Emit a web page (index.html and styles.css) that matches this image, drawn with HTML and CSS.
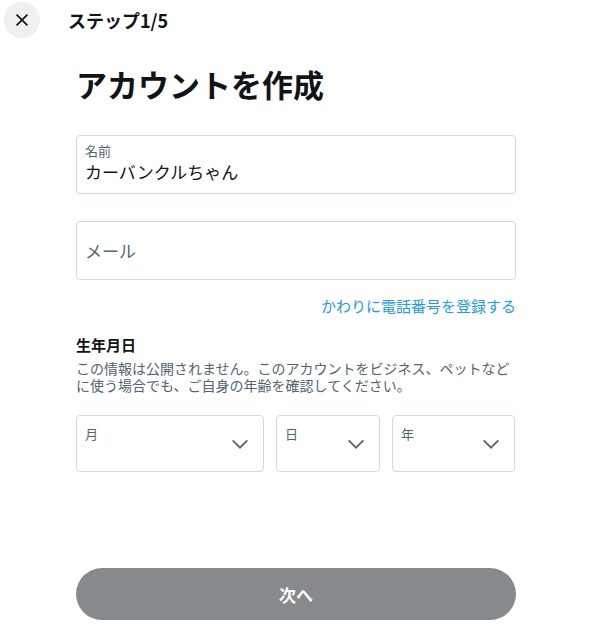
FILE: index.html
```html
<!DOCTYPE html>
<html lang="ja">
<head>
    <meta charset="UTF-8">
    <meta name="viewport" content="width=device-width, initial-scale=1.0">
    <title>アカウントを作成</title>
    <link rel="stylesheet" href="styles.css">
</head>
<body>
    <div class="header">
        <button class="close" aria-label="閉じる">
            <svg viewBox="0 0 24 24" width="20" height="20"><path d="M5.5 5.5l13 13M18.5 5.5l-13 13" stroke="#0f1419" stroke-width="2" fill="none"/></svg>
        </button>
        <div class="step">ステップ1/5</div>
    </div>

    <div class="content">
        <h1>アカウントを作成</h1>

        <div class="field">
            <div class="label">名前</div>
            <div class="value">カーバンクルちゃん</div>
        </div>

        <div class="field field-empty">
            <div class="placeholder">メール</div>
        </div>

        <div class="alt-link"><a href="#">かわりに電話番号を登録する</a></div>

        <div class="section-title">生年月日</div>
        <p class="note">この情報は公開されません。このアカウントをビジネス、ペットなどに使う場合でも、ご自身の年齢を確認してください。</p>

        <div class="dates">
            <div class="select">
                <span class="label">月</span>
                <svg class="chev" viewBox="0 0 24 24" width="22" height="22"><path d="M4 8l8 8 8-8" stroke="#536471" stroke-width="2" fill="none"/></svg>
            </div>
            <div class="select">
                <span class="label">日</span>
                <svg class="chev" viewBox="0 0 24 24" width="22" height="22"><path d="M4 8l8 8 8-8" stroke="#536471" stroke-width="2" fill="none"/></svg>
            </div>
            <div class="select">
                <span class="label">年</span>
                <svg class="chev" viewBox="0 0 24 24" width="22" height="22"><path d="M4 8l8 8 8-8" stroke="#536471" stroke-width="2" fill="none"/></svg>
            </div>
        </div>

        <button class="next" disabled>次へ</button>
    </div>
</body>
</html>
```

FILE: styles.css
```css
body {
    margin: 0;
    background-color: #fff;
    color: #0f1419;
    font-family: "Noto Sans CJK JP", "Noto Sans", sans-serif;
}
.header {
    display: flex;
    align-items: center;
    height: 40px;
    padding: 0 4px;
    gap: 28px;
}
.close {
    width: 36px;
    height: 36px;
    border: none;
    border-radius: 50%;
    background-color: #eff1f1;
    display: flex;
    align-items: center;
    justify-content: center;
    padding: 0;
}
.step {
    font-size: 18px;
    font-weight: bold;
}
.content {
    padding: 0 76px;
}
h1 {
    margin: 24px 0 31px;
    font-size: 31px;
    line-height: 40px;
    font-weight: bold;
}
.field {
    box-sizing: border-box;
    height: 59px;
    border: 1px solid #cfd9de;
    border-radius: 4px;
    padding: 7px 8px 0;
    margin-bottom: 27px;
}
.field .label {
    font-size: 13px;
    line-height: 16px;
    color: #536471;
    margin-bottom: 1px;
}
.value {
    font-size: 17px;
    line-height: 24px;
}
.field-empty {
    display: flex;
    align-items: center;
    padding-top: 0;
    margin-bottom: 16px;
}
.placeholder {
    font-size: 17px;
    color: #536471;
}
.alt-link {
    text-align: right;
    font-size: 15px;
    line-height: 20px;
}
.alt-link a {
    color: #1d9bf0;
    text-decoration: none;
}
.section-title {
    margin-top: 19px;
    font-size: 15px;
    font-weight: bold;
    line-height: 20px;
}
.note {
    margin: 5px 0 21px;
    font-size: 14px;
    line-height: 17px;
    color: #536471;
}
.dates {
    display: grid;
    grid-template-columns: 188px 104px 123px;
    gap: 12px;
}
.select {
    box-sizing: border-box;
    height: 57px;
    border: 1px solid #cfd9de;
    border-radius: 4px;
    position: relative;
    padding: 4px 8px;
}
.select .label {
    font-size: 13px;
    color: #536471;
}
.chev {
    position: absolute;
    right: 12px;
    top: 17px;
}
.next {
    display: block;
    width: 100%;
    height: 52px;
    margin-top: 96px;
    border: none;
    border-radius: 26px;
    background-color: #878a8c;
    color: #fff;
    font-family: inherit;
    font-size: 17px;
    font-weight: bold;
}
```
